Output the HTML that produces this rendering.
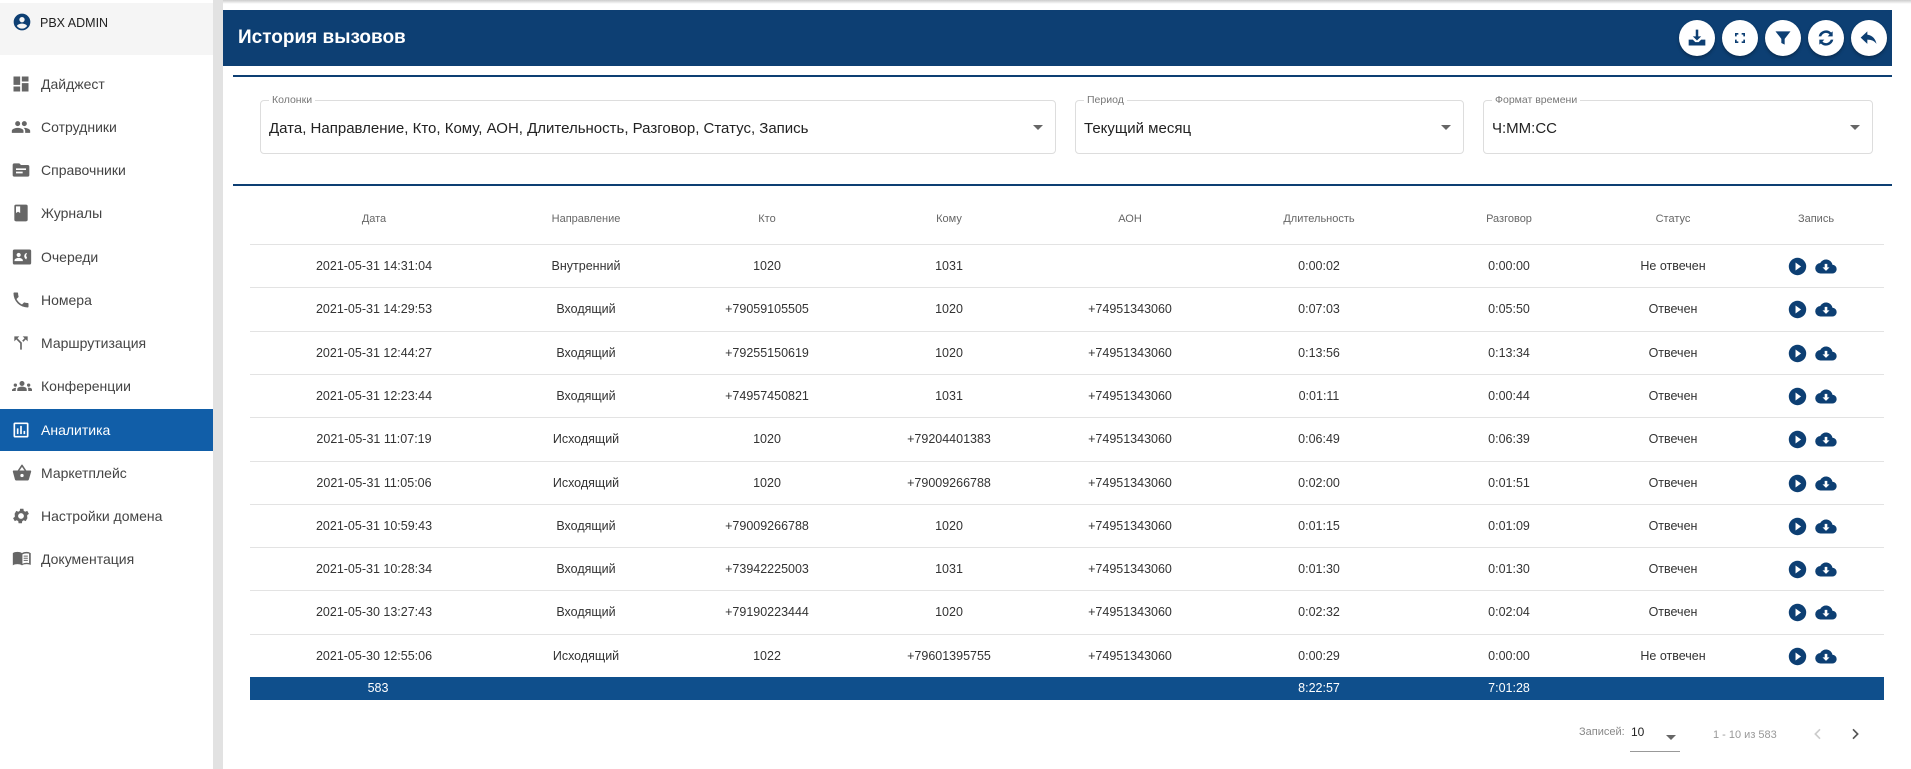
<!DOCTYPE html>
<html><head><meta charset="utf-8"><style>
*{box-sizing:border-box;margin:0;padding:0}
body{width:1911px;height:769px;overflow:hidden;background:#fff;font-family:"Liberation Sans",sans-serif;color:#333;position:relative}
.topsh{position:absolute;left:0;top:0;width:1911px;height:4px;background:linear-gradient(#ccc,#fff)}
.side{position:absolute;left:0;top:0;width:213px;height:769px;background:#fff}
.sidehead{position:absolute;left:0;top:3px;width:213px;height:52px;background:#f5f5f5}
.sidehead span{position:absolute;left:40px;top:13px;font-size:12.5px;color:#222}
.strip{position:absolute;left:213px;top:0;width:10px;height:769px;background:#e2e2e2}
.mi{position:absolute;left:0;width:213px;height:42px;font-size:14px;color:#444}
.mi svg{position:absolute;left:11px;top:11px}
.mi span{position:absolute;left:41px;top:13px}
.mi.act{background:#115ea8;color:#fff}
.hdr{position:absolute;left:223px;top:10px;width:1669px;height:56px;background:#0d3f73}
.hdr h1{position:absolute;left:15px;top:17px;font-size:19px;color:#fff;font-weight:bold}
.hb{position:absolute;top:10px;width:36px;height:36px;border-radius:50%;background:#fff;box-shadow:0 2px 3px rgba(0,0,0,.3)}
.hb svg{position:absolute;left:8px;top:8px}
.line{position:absolute;left:233px;width:1659px;height:1.5px;background:#0d3f73}
.sel{position:absolute;top:100px;height:54px;border:1px solid #ddd;border-radius:4px}
.sel label{position:absolute;left:8px;top:-7px;background:#fff;padding:0 3px;font-size:10.5px;color:#777}
.sel .v{position:absolute;left:8px;top:19px;font-size:15px;color:#222}
.sel .ar{position:absolute;right:12px;top:24px;width:0;height:0;border-left:5px solid transparent;border-right:5px solid transparent;border-top:5px solid #666}
.th{position:absolute;top:213px;font-size:11px;color:#666;transform:translateX(-50%);white-space:nowrap}
.rl{position:absolute;left:250px;width:1634px;height:1px;background:#e3e3e3}
.td{position:absolute;font-size:12.5px;color:#333;transform:translateX(-50%);white-space:nowrap}
.foot{position:absolute;left:250px;top:677px;width:1634px;height:23px;background:#0f4f8c;color:#fff;font-size:12.5px}
.foot span{position:absolute;top:4px;transform:translateX(-50%)}
.ic{position:absolute}
</style></head><body>
<div class="topsh"></div>
<div class="side">
<div class="sidehead"><svg style="position:absolute;left:12px;top:9px" width="20" height="20" viewBox="0 0 24 24"><path fill="#0d3f73" d="M12 2A10 10 0 1 0 12 22 10 10 0 0 0 12 2zm0 4a3.2 3.2 0 1 1 0 6.4A3.2 3.2 0 0 1 12 6zm0 14a7.5 7.5 0 0 1-6-3c.1-2 4-3 6-3s5.9 1 6 3a7.5 7.5 0 0 1-6 3z"/></svg><span>PBX ADMIN</span></div>
</div>
<div class="strip"></div>

<div class="mi" style="top:63px"><svg width="20" height="20" viewBox="0 0 24 24"><path fill="#666" d="M3 13h8V3H3zm0 8h8v-6H3zm10 0h8V11h-8zm0-18v6h8V3z"/></svg><span>Дайджест</span></div>
<div class="mi" style="top:106px"><svg width="20" height="20" viewBox="0 0 24 24"><path fill="#666" d="M16 11a3 3 0 1 0 0-6 3 3 0 0 0 0 6zm-8 0a3 3 0 1 0 0-6 3 3 0 0 0 0 6zm0 2c-2.3 0-7 1.2-7 3.5V19h14v-2.5C15 14.2 10.3 13 8 13zm8 0c-.3 0-.6 0-1 .1 1.2.8 2 2 2 3.4V19h6v-2.5c0-2.300-4.7-3.5-7-3.5z"/></svg><span>Сотрудники</span></div>
<div class="mi" style="top:149px"><svg width="20" height="20" viewBox="0 0 24 24"><path fill="#666" d="M20 6h-8l-2-2H4a2 2 0 0 0-2 2v12a2 2 0 0 0 2 2h16a2 2 0 0 0 2-2V8a2 2 0 0 0-2-2zm-6 10H6v-2h8zm4-4H6v-2h12z"/></svg><span>Справочники</span></div>
<div class="mi" style="top:192px"><svg width="20" height="20" viewBox="0 0 24 24"><path fill="#666" d="M18 2H6a2 2 0 0 0-2 2v16a2 2 0 0 0 2 2h12a2 2 0 0 0 2-2V4a2 2 0 0 0-2-2zM6 4h5v8l-2.5-1.5L6 12z"/></svg><span>Журналы</span></div>
<div class="mi" style="top:236px"><svg width="22" height="20" viewBox="0 0 24 24"><path fill="#666" d="M21 3H3a2 2 0 0 0-2 2v14a2 2 0 0 0 2 2h18a2 2 0 0 0 2-2V5a2 2 0 0 0-2-2zM8 7a2.5 2.5 0 1 1 0 5 2.5 2.5 0 0 1 0-5zm5 10H3v-1c0-2 3-3 5-3s5 1 5 3zm4-2-1.5-1.5a4.5 4.5 0 0 1 0-5L17 7l1 1a3 3 0 0 0 0 4.5z"/></svg><span>Очереди</span></div>
<div class="mi" style="top:279px"><svg width="20" height="20" viewBox="0 0 24 24"><path fill="#666" d="M6.6 10.8a15 15 0 0 0 6.6 6.6l2.2-2.2c.3-.3.7-.4 1-.2 1.1.4 2.3.6 3.6.6.6 0 1 .4 1 1V20c0 .6-.4 1-1 1A17 17 0 0 1 3 4c0-.6.4-1 1-1h3.5c.6 0 1 .4 1 1 0 1.3.2 2.5.6 3.6.1.3 0 .7-.2 1z"/></svg><span>Номера</span></div>
<div class="mi" style="top:322px"><svg width="20" height="20" viewBox="0 0 24 24"><path fill="#666" d="M14 4l2.3 2.3-2.9 2.9 1.4 1.4 2.9-2.9L20 10V4zM10 4H4v6l2.3-2.3 4.7 4.7V20h2v-8.4L7.7 6.3z"/></svg><span>Маршрутизация</span></div>
<div class="mi" style="top:365px"><svg width="22" height="20" viewBox="0 0 24 24"><path fill="#666" d="M12 12.8c1.6 0 3 .4 4.1.9 1 .4 1.6 1.4 1.6 2.5V18H6.3v-1.8c0-1.1.6-2.1 1.6-2.5 1.1-.5 2.5-.9 4.1-.9zM4 13a2 2 0 1 0 0-4 2 2 0 0 0 0 4zm1.1 1.1A7 7 0 0 0 0 16.4V18h4.5v-1.6c0-.8.2-1.6.6-2.3zM20 13a2 2 0 1 0 0-4 2 2 0 0 0 0 4zm4 3.4c0-.8-.5-1.5-1.2-1.8a7 7 0 0 0-3.9-.5c.4.7.6 1.5.6 2.3V18H24zM12 6a3 3 0 1 1 0 6 3 3 0 0 1 0-6z"/></svg><span>Конференции</span></div>
<div class="mi act" style="top:409px"><svg width="20" height="20" viewBox="0 0 24 24"><path fill="#fff" d="M19 3H5a2 2 0 0 0-2 2v14a2 2 0 0 0 2 2h14a2 2 0 0 0 2-2V5a2 2 0 0 0-2-2zm0 16H5V5h14zM7 10h2v7H7zm4-3h2v10h-2zm4 6h2v4h-2z"/></svg><span>Аналитика</span></div>
<div class="mi" style="top:452px"><svg width="22" height="20" viewBox="0 0 24 24"><path fill="#666" d="M17.2 9l-4.4-6.6a1 1 0 0 0-1.6 0L6.8 9H2c-.6 0-1 .4-1 1v.3l2.5 9.3c.2.8 1 1.4 1.9 1.4h13c.9 0 1.7-.6 1.9-1.4L23 10.3V10c0-.6-.4-1-1-1zM9 9l3-4.4L15 9zm3 8a2 2 0 1 1 0-4 2 2 0 0 1 0 4z"/></svg><span>Маркетплейс</span></div>
<div class="mi" style="top:495px"><svg width="20" height="20" viewBox="0 0 24 24"><path fill="#666" d="M19.4 13a7.5 7.5 0 0 0 0-2l2.1-1.6-2-3.5-2.5 1a7.5 7.5 0 0 0-1.7-1l-.4-2.6h-4l-.4 2.6a7.5 7.5 0 0 0-1.7 1l-2.5-1-2 3.5L4.6 11a7.5 7.5 0 0 0 0 2l-2.1 1.6 2 3.5 2.5-1c.5.4 1.1.7 1.7 1l.4 2.6h4l.4-2.6c.6-.3 1.2-.6 1.7-1l2.5 1 2-3.5zM12 15.5a3.5 3.5 0 1 1 0-7 3.5 3.5 0 0 1 0 7z"/></svg><span>Настройки домена</span></div>
<div class="mi" style="top:538px"><svg width="22" height="20" viewBox="0 0 24 24"><path fill="#666" d="M21 4c-1.1-.3-2.3-.5-3.5-.5-2 0-4 .4-5.5 1.5-1.5-1.1-3.5-1.5-5.5-1.5S2.5 3.9 1 5v14.6c1.5-1.1 3.5-1.5 5.5-1.5s4 .4 5.5 1.5c1.5-1.1 3.5-1.5 5.5-1.5 1.2 0 2.4.2 3.5.5.5.2 1 .3 1.5.5V5c-.5-.3-1-.6-2-1zm-.5 13c-1-.3-2-.5-3-.5-1.7 0-3.5.5-5 1.3V6.5c1.5-.8 3.3-1.3 5-1.3 1 0 2 .1 3 .4zM14 8h5v1.2h-5zm0 2.5h5v1.2h-5zm0 2.5h5v1.2h-5z"/></svg><span>Документация</span></div>

<div class="hdr"><h1>История вызовов</h1>
<div class="hb" style="left:1456px"><svg width="20" height="20" viewBox="0 0 24 24"><path fill="#0d3f73" d="M10.5 2h3v8h3.5L12 15 7 10h3.5zM2 14h5l3 3h4l3-3h5v7H2zm16 4h1.5v1.5H18zm2 0h1.5v1.5H20z"/></svg></div>
<div class="hb" style="left:1499px"><svg width="20" height="20" viewBox="0 0 24 24"><path fill="none" stroke="#0d3f73" stroke-width="2" d="M7 10V7h3M14 7h3v3M17 14v3h-3M10 17H7v-3"/></svg></div>
<div class="hb" style="left:1542px"><svg width="20" height="20" viewBox="0 0 24 24"><path fill="#0d3f73" d="M3 4h18l-7 9v7l-4-2v-5z"/></svg></div>
<div class="hb" style="left:1585px"><svg width="20" height="20" viewBox="0 0 24 24"><path fill="#0d3f73" d="M20 4v6h-6l2.3-2.3A6 6 0 0 0 6.3 10H3.2a9 9 0 0 1 15-4.6zM4 20v-6h6l-2.3 2.3a6 6 0 0 0 10-2.3h3.1a9 9 0 0 1-15 4.6z"/></svg></div>
<div class="hb" style="left:1628px"><svg width="20" height="20" viewBox="0 0 24 24"><path fill="#0d3f73" d="M10 9V4l-8 7.5 8 7.5v-5c5 0 8.5 1.6 11 5.1-1-5-4-10-11-11.1z"/></svg></div>
</div>
<div class="line" style="top:75px"></div>
<div class="sel" style="left:260px;width:796px"><label>Колонки</label><div class="v">Дата, Направление, Кто, Кому, АОН, Длительность, Разговор, Статус, Запись</div><div class="ar"></div></div>
<div class="sel" style="left:1075px;width:389px"><label>Период</label><div class="v">Текущий месяц</div><div class="ar"></div></div>
<div class="sel" style="left:1483px;width:390px"><label>Формат времени</label><div class="v">Ч:ММ:СС</div><div class="ar"></div></div>
<div class="line" style="top:184px"></div>

<div class="th" style="left:374px">Дата</div><div class="th" style="left:586px">Направление</div><div class="th" style="left:767px">Кто</div><div class="th" style="left:949px">Кому</div><div class="th" style="left:1130px">АОН</div><div class="th" style="left:1319px">Длительность</div><div class="th" style="left:1509px">Разговор</div><div class="th" style="left:1673px">Статус</div><div class="th" style="left:1816px">Запись</div>

<div id="rows"></div>
<script>
(function(){
var d=[["2021-05-31 14:31:04","Внутренний","1020","1031","","0:00:02","0:00:00","Не отвечен"],
["2021-05-31 14:29:53","Входящий","+79059105505","1020","+74951343060","0:07:03","0:05:50","Отвечен"],
["2021-05-31 12:44:27","Входящий","+79255150619","1020","+74951343060","0:13:56","0:13:34","Отвечен"],
["2021-05-31 12:23:44","Входящий","+74957450821","1031","+74951343060","0:01:11","0:00:44","Отвечен"],
["2021-05-31 11:07:19","Исходящий","1020","+79204401383","+74951343060","0:06:49","0:06:39","Отвечен"],
["2021-05-31 11:05:06","Исходящий","1020","+79009266788","+74951343060","0:02:00","0:01:51","Отвечен"],
["2021-05-31 10:59:43","Входящий","+79009266788","1020","+74951343060","0:01:15","0:01:09","Отвечен"],
["2021-05-31 10:28:34","Входящий","+73942225003","1031","+74951343060","0:01:30","0:01:30","Отвечен"],
["2021-05-30 13:27:43","Входящий","+79190223444","1020","+74951343060","0:02:32","0:02:04","Отвечен"],
["2021-05-30 12:55:06","Исходящий","1022","+79601395755","+74951343060","0:00:29","0:00:00","Не отвечен"]];
var x=[374,586,767,949,1130,1319,1509,1673],h="";
for(var i=0;i<10;i++){var ty=244+i*43.3;h+='<div class="rl" style="top:'+ty+'px"></div>';
for(var j=0;j<8;j++)h+='<div class="td" style="left:'+x[j]+'px;top:'+(ty+15)+'px">'+d[i][j]+'</div>';
h+='<svg class="ic" style="left:1788px;top:'+(ty+13)+'px" width="19" height="19" viewBox="0 0 24 24"><circle cx="12" cy="12" r="11" fill="#0d3f73"/><path fill="#fff" d="M9.5 7v10l7-5z"/></svg>';
h+='<svg class="ic" style="left:1814px;top:'+(ty+12)+'px" width="24" height="21" viewBox="0 0 24 24"><path fill="#0d3f73" d="M19.4 10A7.5 7.5 0 0 0 5.4 8 6 6 0 0 0 6 20h13a5 5 0 0 0 .4-10z"/><path fill="#fff" d="M10.5 9h3v4H16l-4 4-4-4h2.5z"/></svg>';}
h+='<div class="rl" style="top:677px"></div>';
document.getElementById("rows").innerHTML=h;
})();
</script>
<div class="foot"><span style="left:128px">583</span><span style="left:1069px">8:22:57</span><span style="left:1259px">7:01:28</span></div>

<div style="position:absolute;left:1579px;top:726px;font-size:11px;color:#888">Записей:</div>
<div style="position:absolute;left:1631px;top:725px;font-size:12px;color:#222">10</div>
<div style="position:absolute;left:1666px;top:735px;border-left:5px solid transparent;border-right:5px solid transparent;border-top:5px solid #666"></div>
<div style="position:absolute;left:1630px;top:751px;width:50px;height:1px;background:#999"></div>
<div style="position:absolute;left:1713px;top:729px;font-size:11px;color:#999">1 - 10 из 583</div>
<svg class="ic" style="left:1810px;top:726px" width="16" height="16" viewBox="0 0 24 24"><path fill="none" stroke="#ccc" stroke-width="2.5" d="M15 5l-7 7 7 7"/></svg>
<svg class="ic" style="left:1847px;top:726px" width="16" height="16" viewBox="0 0 24 24"><path fill="none" stroke="#555" stroke-width="2.5" d="M9 5l7 7-7 7"/></svg>
</body></html>
